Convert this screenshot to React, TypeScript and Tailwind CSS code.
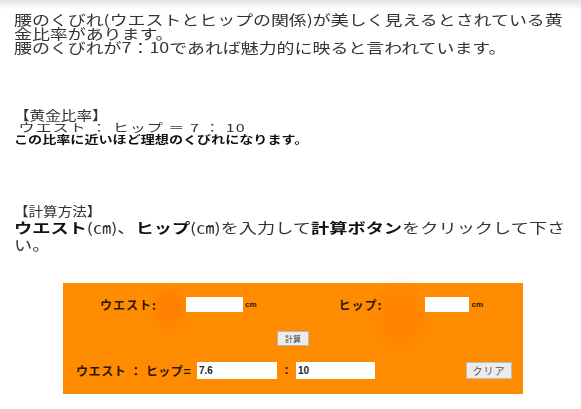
import React from "react";

const jp = "font-['Noto_Sans_CJK_JP','Noto_Sans',sans-serif]";

function Field({ width, value }: { width: string; value?: string }) {
  return (
    <input
      readOnly
      value={value ?? ""}
      className={`${width} h-full bg-white border-0 outline-none px-[2px] text-[10px] leading-none text-[#222] font-['Liberation_Sans',sans-serif]`}
    />
  );
}

export default function App() {
  return (
    <div className={`w-[581px] h-[409px] bg-white overflow-hidden ${jp}`}>
      {/* faint header strip */}
      <div className="h-[9px] bg-gradient-to-b from-[#e4e4e4] via-[#efefef] to-white" />

      {/* intro (wide, condensed-height glyphs) */}
      <div className="pl-[14px] pt-[3px] text-[14px] leading-[14px] text-[#333] whitespace-nowrap">
        <div className="origin-left scale-x-[1.28]">
          <p>腰のくびれ(ウエストとヒップの関係)が美しく見えるとされている黄</p>
          <p>金比率があります。</p>
          <p>腰のくびれが7：10であれば魅力的に映ると言われています。</p>
        </div>
      </div>

      {/* golden ratio */}
      <div className="pl-[14px] mt-[54px] text-[#333] whitespace-nowrap">
        <p className="origin-left scale-x-[1.2] text-[13px] leading-[14px]">【黄金比率】</p>
        <p className="origin-left scale-x-[1.47] pl-[3px] text-[11px] leading-[11px] tracking-[0.6px]">
          ウエスト ： ヒップ ＝ 7 ： 10
        </p>
        <p className="origin-left scale-x-[1.28] text-[11px] leading-[12px] font-bold text-[#111]">
          この比率に近いほど理想のくびれになります。
        </p>
      </div>

      {/* how to calculate */}
      <div className="pl-[14px] mt-[57px] text-[14px] leading-[17px] text-[#333] whitespace-nowrap">
        <p className="origin-left scale-x-[1.12] text-[13px]">【計算方法】</p>
        <div className="origin-left scale-x-[1.3]">
          <p>
            <b className="text-[#111]">ウエスト</b>(㎝)、<b className="text-[#111]">ヒップ</b>(㎝)を入力して
            <b className="text-[#111]">計算ボタン</b>をクリックして下さ
          </p>
          <p>い。</p>
        </div>
      </div>

      {/* calculator panel */}
      <div className="relative ml-[63px] mt-[30px] w-[460px] h-[111px] bg-[#ff8c00] pt-[14px] flex flex-col">
        <div className="pointer-events-none absolute left-[92px] top-[8px] w-[30px] h-[36px] rounded-full bg-[#ff7a00] blur-[6px] opacity-70" />
        <div className="pointer-events-none absolute left-[318px] top-[8px] w-[40px] h-[54px] rounded-full bg-[#ff7e00] blur-[8px] opacity-70" />

        <div className="relative flex items-center h-[15px] text-[#2e1700] font-bold">
          <span className="ml-[37px] w-[86px] text-[12px] tracking-[1px]">ウエスト:</span>
          <Field width="w-[57px]" />
          <span className="ml-[2px] text-[8px] font-['Liberation_Sans',sans-serif]">cm</span>
          <span className="ml-[82px] w-[86px] text-[12px] tracking-[1px]">ヒップ:</span>
          <Field width="w-[44px]" />
          <span className="ml-[3px] text-[8px] font-['Liberation_Sans',sans-serif]">cm</span>
        </div>

        <div className="relative flex justify-center mt-[19px]">
          <button className="w-[32px] h-[15px] bg-[#ececec] border border-[#b5b5b5] text-[8px] leading-none text-[#444]">
            計算
          </button>
        </div>

        <div className="relative flex items-center h-[17px] mt-[16px] text-[#2e1700] font-bold">
          <span className="ml-[13px] w-[121px] text-[12px] tracking-[0.6px] whitespace-nowrap">
            ウエスト ： ヒップ=
          </span>
          <Field width="w-[80px]" value="7.6" />
          <span className="w-[19px] text-center text-[11px]">：</span>
          <Field width="w-[79px]" value="10" />
          <button className="ml-[91px] w-[46px] h-[17px] bg-[#ececec] border border-[#bdbdbd] text-[10px] leading-none text-[#555] font-normal tracking-[1px]">
            クリア
          </button>
        </div>
      </div>
    </div>
  );
}
